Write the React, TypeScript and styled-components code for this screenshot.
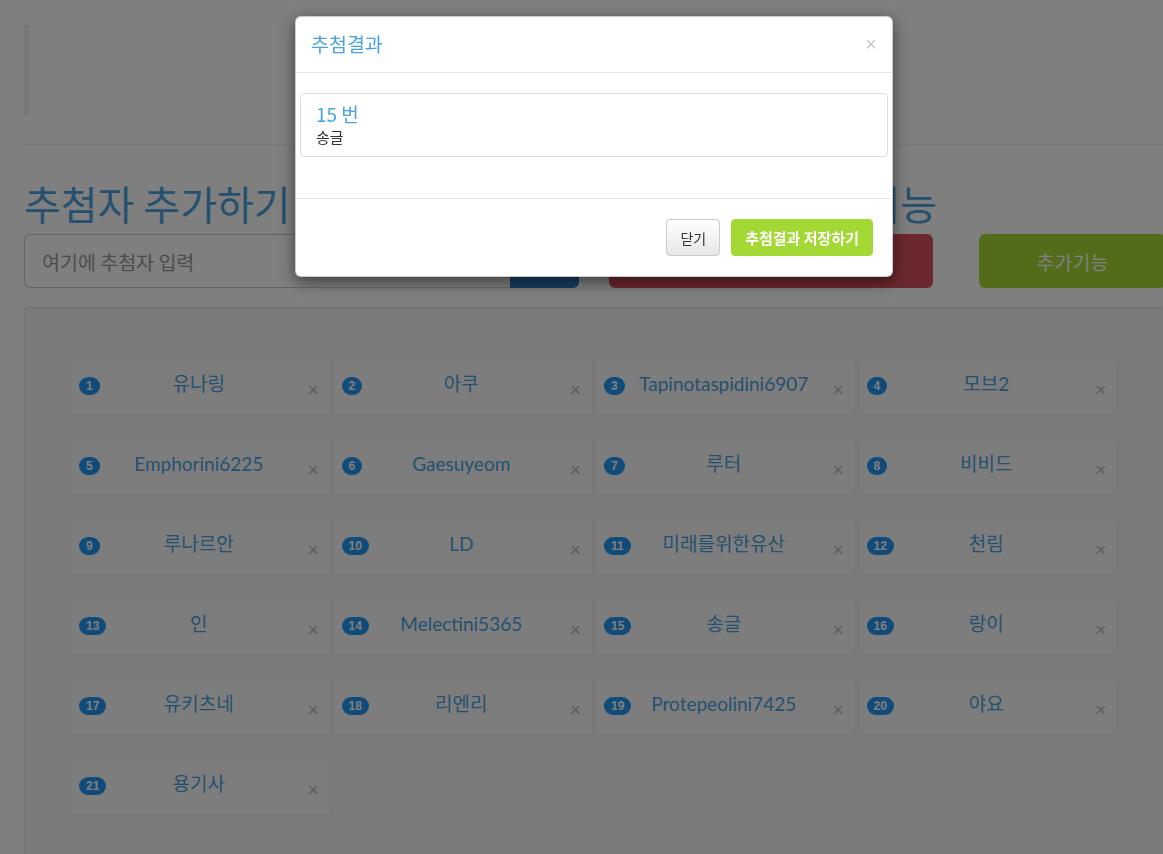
import React from 'react';
import styled, { createGlobalStyle } from 'styled-components';

const FONT = `"Noto Sans CJK KR", "Noto Sans", sans-serif`;
const NAME_FONT = `Lato, "Noto Sans CJK KR", sans-serif`;

const colors = {
    BLUE: '#4aa3df',
    BADGE: '#2196f3',
    PRIMARY: '#2a7bbf',
    DANGER: '#d9505e',
    LIME: '#a4d935',
    BORDER: '#cccccc',
    TEXT: '#333333',
};

const GlobalStyle = createGlobalStyle`
    html, body {
        margin: 0;
        padding: 0;
        background: #fff;
        overflow: hidden;
    }
    body {
        font-family: ${FONT};
        color: ${colors.TEXT};
    }
    * {
        box-sizing: border-box;
    }
`;

const Page = styled.div`
    width: 1190px;
    min-height: 854px;
    padding: 25px 24px 0;
`;

const Quote = styled.div`
    height: 90px;
    border-left: 5px solid #eeeeee;
`;

const Divider = styled.hr`
    margin: 29px 0 0;
    border: 0;
    border-top: 1px solid #eeeeee;
    height: 0;
`;

const Toolbar = styled.div`
    display: grid;
    grid-template-columns: 555px 324px 1fr;
    column-gap: 30px;
    margin-top: 36px;
`;

const Heading = styled.h1`
    margin: 0 0 9px;
    font-size: 40px;
    line-height: 44px;
    font-weight: 400;
    color: ${colors.BLUE};
    white-space: nowrap;
`;

const InputGroup = styled.div`
    display: flex;
    height: 54px;
`;

const Input = styled.input`
    flex: 1;
    height: 100%;
    padding: 0 17px;
    border: 1px solid ${colors.BORDER};
    border-right: 0;
    border-radius: 6px 0 0 6px;
    font-family: ${FONT};
    font-size: 19.5px;
    color: ${colors.TEXT};
    outline: none;

    &::placeholder {
        color: #999;
    }
`;

const AddButton = styled.button`
    width: 69px;
    border: 0;
    border-radius: 0 6px 6px 0;
    background: ${colors.PRIMARY};
    color: #fff;
    font-family: ${FONT};
    font-size: 18px;
`;

const ActionButton = styled.button<{ $tone: string; $offset?: number }>`
    height: 54px;
    margin-left: ${p => p.$offset || 0}px;
    border: 0;
    border-radius: 6px;
    background: ${p => p.$tone};
    color: #fff;
    font-family: ${FONT};
    font-size: 19.5px;
`;

const Well = styled.div`
    margin-top: 19px;
    min-height: 600px;
    padding: 50px 47px 60px 45px;
    background: #f5f5f5;
    border: 1px solid #e3e3e3;
    border-radius: 4px;
`;

const Grid = styled.div`
    display: grid;
    grid-template-columns: repeat(4, 1fr);
    column-gap: 2px;
    row-gap: 23px;
`;

const Entry = styled.div`
    display: grid;
    grid-template-columns: 1fr auto 1fr;
    align-items: center;
    height: 57px;
    padding: 0 11px 0 8px;
    background: #fafafa;
    border: 1px solid #efefef;
    border-radius: 3px;
`;

const Badge = styled.span`
    justify-self: start;
    height: 18px;
    margin-bottom: 2px;
    padding: 0 7px;
    border-radius: 9px;
    background: ${colors.BADGE};
    color: #fff;
    font-family: "Liberation Sans", Arial, sans-serif;
    font-size: 12px;
    font-weight: 700;
    line-height: 18px;
`;

const Name = styled.span`
    margin-bottom: 5px;
    font-family: ${NAME_FONT};
    font-size: 19px;
    line-height: 24px;
    color: ${colors.BLUE};
    white-space: nowrap;
`;

const Remove = styled.span`
    justify-self: end;
    margin-top: 6px;
    font-family: "Liberation Sans", Arial, sans-serif;
    font-size: 19px;
    line-height: 19px;
    color: #bbbbbb;
`;

const Backdrop = styled.div`
    position: fixed;
    inset: 0;
    background: rgba(0, 0, 0, 0.5);
`;

const Modal = styled.div`
    position: fixed;
    top: 16px;
    left: 295px;
    width: 598px;
    background: #fff;
    border: 1px solid rgba(0, 0, 0, 0.2);
    border-radius: 6px;
    box-shadow: 0 5px 15px rgba(0, 0, 0, 0.5);
`;

const ModalHeader = styled.div`
    display: flex;
    justify-content: space-between;
    align-items: center;
    height: 56px;
    padding: 0 15px 2px;
    border-bottom: 1px solid #e5e5e5;
`;

const ModalTitle = styled.h4`
    margin: 0;
    font-size: 19.5px;
    font-weight: 400;
    line-height: 25px;
    color: ${colors.BLUE};
`;

const Close = styled.span`
    font-family: "Liberation Sans", Arial, sans-serif;
    font-size: 20px;
    line-height: 20px;
    color: #c8c8c8;
`;

const ModalBody = styled.div`
    padding: 20px 4px 21px 4px;
`;

const ResultItem = styled.div`
    margin-bottom: 20px;
    padding: 10px 15px;
    border: 1px solid #dddddd;
    border-radius: 4px;
`;

const ResultNumber = styled.div`
    margin-bottom: 4px;
    font-size: 19px;
    line-height: 20px;
    color: ${colors.BLUE};
`;

const ResultName = styled.div`
    font-size: 15px;
    line-height: 18px;
    color: ${colors.TEXT};
`;

const ModalFooter = styled.div`
    display: flex;
    justify-content: flex-end;
    gap: 11px;
    padding: 20px 19px 20px;
    border-top: 1px solid #e5e5e5;
`;

const FooterButton = styled.button<{ $primary?: boolean }>`
    height: 37px;
    padding: 0 13px;
    border-radius: 4px;
    font-family: ${FONT};
    font-size: ${p => (p.$primary ? 15 : 14)}px;
    font-weight: ${p => (p.$primary ? 700 : 400)};
    color: ${p => (p.$primary ? '#fff' : '#333')};
    border: 1px solid ${p => (p.$primary ? colors.LIME : colors.BORDER)};
    background: ${p => (p.$primary ? colors.LIME : 'linear-gradient(#ffffff, #e6e6e6)')};
`;

const entries = [
    '유나링', '아쿠', 'Tapinotaspidini6907', '모브2',
    'Emphorini6225', 'Gaesuyeom', '루터', '비비드',
    '루나르안', 'LD', '미래를위한유산', '천림',
    '인', 'Melectini5365', '송글', '랑이',
    '유키츠네', '리엔리', 'Protepeolini7425', '야요',
    '용기사',
];

export default function App() {
    return (
        <>
            <GlobalStyle />
            <Page>
                <Quote />
                <Divider />
                <Toolbar>
                    <Heading>추첨자 추가하기</Heading>
                    <Heading>추첨하기 / 추가기능</Heading>
                    <div />
                    <InputGroup>
                        <Input placeholder="여기에 추첨자 입력" />
                        <AddButton>추가</AddButton>
                    </InputGroup>
                    <ActionButton $tone={colors.DANGER}>추첨하기</ActionButton>
                    <ActionButton $tone={colors.LIME} $offset={16}>
                        추가기능
                    </ActionButton>
                </Toolbar>
                <Well>
                    <Grid>
                        {entries.map((name, i) => (
                            <Entry key={name}>
                                <Badge>{i + 1}</Badge>
                                <Name>{name}</Name>
                                <Remove>×</Remove>
                            </Entry>
                        ))}
                    </Grid>
                </Well>
            </Page>

            <Backdrop />
            <Modal>
                <ModalHeader>
                    <ModalTitle>추첨결과</ModalTitle>
                    <Close>×</Close>
                </ModalHeader>
                <ModalBody>
                    <ResultItem>
                        <ResultNumber>15 번</ResultNumber>
                        <ResultName>송글</ResultName>
                    </ResultItem>
                </ModalBody>
                <ModalFooter>
                    <FooterButton>닫기</FooterButton>
                    <FooterButton $primary>추첨결과 저장하기</FooterButton>
                </ModalFooter>
            </Modal>
        </>
    );
}
